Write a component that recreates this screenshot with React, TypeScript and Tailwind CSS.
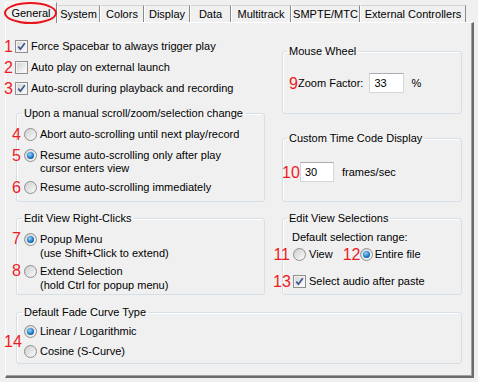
import React from "react";

const tabs = [
  { label: "General", w: "w-[52px]", selected: true },
  { label: "System", w: "w-[43px]" },
  { label: "Colors", w: "w-[44px]" },
  { label: "Display", w: "w-[46px]" },
  { label: "Data", w: "w-[41px]" },
  { label: "Multitrack", w: "w-[60px]" },
  { label: "SMPTE/MTC", w: "w-[69px]" },
  { label: "External Controllers", w: "w-[106px]" },
];

const Num: React.FC<{ n: string; className?: string }> = ({ n, className = "" }) => (
  <span className={`shrink-0 text-right text-[16px] leading-[13px] text-[#ec1c24] ${className}`}>{n}</span>
);

const Check: React.FC<{ checked?: boolean; className?: string }> = ({ checked, className = "" }) => (
  <span className={`shrink-0 w-[13px] h-[13px] border border-[#8e8f8f] bg-white flex items-center justify-center ${className}`}>
    <span className="w-[11px] h-[11px] border border-[#f4f4f4] bg-linear-to-br from-[#d6d6d6] to-[#fbfbfb] flex items-center justify-center">
      {checked && (
        <svg width="9" height="9" viewBox="0 0 9 9">
          <path d="M1.3 4.6 L3.4 7.2 L7.8 1.2" fill="none" stroke="#3f5590" strokeWidth="1.7" />
        </svg>
      )}
    </span>
  </span>
);

const Radio: React.FC<{ checked?: boolean; className?: string }> = ({ checked, className = "" }) => (
  <span className={`shrink-0 w-[13px] h-[13px] rounded-full border border-[#8e8f8f] bg-linear-to-br from-[#cfcfcf] to-[#fbfbfb] flex items-center justify-center ${className}`}>
    {checked && (
      <span className="w-[7px] h-[7px] rounded-full bg-[radial-gradient(circle_at_40%_35%,#9ad8ff,#1d78c4_55%,#0b3f7a)]" />
    )}
  </span>
);

const Group: React.FC<{ title: string; className?: string; children: React.ReactNode; right?: boolean }> = ({
  title,
  className = "",
  children,
  right,
}) => (
  <fieldset className={`border border-[#d5dfe5] rounded-[3px] shadow-[inset_1px_1px_0_#ffffff] ${className}`}>
    <legend className={`${right ? "ml-[4px]" : "ml-[5px]"} px-[2px] leading-[14px]`}>{title}</legend>
    {children}
  </fieldset>
);

const TextBox: React.FC<{ value: string; className?: string }> = ({ value, className = "" }) => (
  <span className={`h-[20px] bg-white border border-[#d3d6dc] border-t-[#abadb3] flex items-center pl-[4px] ${className}`}>
    {value}
  </span>
);

export default function App() {
  return (
    <div className="w-[478px] h-[382px] bg-[#f0f0f0] overflow-hidden font-['Liberation_Sans',Arial,sans-serif] text-[11px] text-black">
      {/* tab strip */}
      <div className="relative z-10 flex items-end h-[22px] pl-[5px]">
        {tabs.map((t) =>
          t.selected ? (
            <div
              key={t.label}
              className={`relative ${t.w} h-[21px] -mb-[1px] bg-[#f0f0f0] border-l border-t border-white border-r border-r-[#8a8a8a] flex justify-center pt-[4px] leading-[13px]`}
            >
              {t.label}
              <span className="absolute -left-[2px] -top-[1px] w-[53px] h-[22px] rounded-[50%] border-2 border-[#e8141c]" />
            </div>
          ) : (
            <div
              key={t.label}
              className={`${t.w} h-[17px] bg-[#f0f0f0] border-t border-t-[#d4d4d4] border-l border-l-white border-r border-r-[#8a8a8a] flex justify-center pt-[2px] leading-[13px]`}
            >
              {t.label}
            </div>
          )
        )}
      </div>

      {/* tab page */}
      <div className="ml-[5px] w-[469px] h-[356px] border-t border-l border-white border-r-2 border-b-2 border-r-[#6b6b6b] border-b-[#6b6b6b] shadow-[inset_-1px_-1px_0_#a0a0a0] pl-[10px] flex flex-col">
        <div className="flex">
          {/* left column */}
          <div className="w-[249px] flex flex-col">
            <div className="pt-[13px] -ml-[12px] flex flex-col">
              {[
                { n: "1", text: "Force Spacebar to always trigger play", c: true },
                { n: "2", text: "Auto play on external launch", c: false },
                { n: "3", text: "Auto-scroll during playback and recording", c: true },
              ].map((r) => (
                <div key={r.n} className="h-[21px] flex items-center">
                  <Num n={r.n} className="w-[9px]" />
                  <Check checked={r.c} className="ml-[2px]" />
                  <span className="ml-[3px]">{r.text}</span>
                </div>
              ))}
            </div>

            <Group title="Upon a manual scroll/zoom/selection change" className="mt-[7px] pb-[7px]">
              <div className="flex items-start mt-[8px] leading-[13px]">
                <Num n="4" className="w-[9px] -ml-[5px]" />
                <Radio className="ml-[3px]" />
                <span className="ml-[3px]">Abort auto-scrolling until next play/record</span>
              </div>
              <div className="flex items-start mt-[8px] leading-[13px]">
                <Num n="5" className="w-[9px] -ml-[5px]" />
                <Radio checked className="ml-[3px]" />
                <span className="ml-[3px]">
                  Resume auto-scrolling only after play
                  <br />
                  cursor enters view
                </span>
              </div>
              <div className="flex items-start mt-[6px] leading-[13px]">
                <Num n="6" className="w-[9px] -ml-[5px]" />
                <Radio className="ml-[3px]" />
                <span className="ml-[3px]">Resume auto-scrolling immediately</span>
              </div>
            </Group>

            <Group title="Edit View Right-Clicks" className="mt-[9px] pb-[2px]">
              <div className="flex items-start mt-[7px] leading-[14px]">
                <Num n="7" className="w-[9px] -ml-[5px] leading-[14px]" />
                <Radio checked className="ml-[3px] mt-[1px]" />
                <span className="ml-[3px]">
                  Popup Menu
                  <br />
                  (use Shift+Click to extend)
                </span>
              </div>
              <div className="flex items-start mt-[4px] leading-[14px]">
                <Num n="8" className="w-[9px] -ml-[5px] leading-[14px]" />
                <Radio className="ml-[3px] mt-[1px]" />
                <span className="ml-[3px]">
                  Extend Selection
                  <br />
                  (hold Ctrl for popup menu)
                </span>
              </div>
            </Group>
          </div>

          {/* right column */}
          <div className="ml-[17px] w-[180px] flex flex-col">
            <Group title="Mouse Wheel" right className="mt-[21px] pb-[20px]">
              <div className="flex items-center h-[20px] mt-[15px] pl-[6px]">
                <Num n="9" className="w-[9px] text-left" />
                <span>Zoom Factor:</span>
                <TextBox value="33" className="w-[35px] ml-[6px]" />
                <span className="ml-[7px]">%</span>
              </div>
            </Group>

            <Group title="Custom Time Code Display" right className="mt-[17px] pb-[19px]">
              <div className="flex items-center h-[20px] mt-[17px]">
                <Num n="10" className="w-[17px] -ml-[1px] text-left" />
                <TextBox value="30" className="w-[34px] ml-[1px]" />
                <span className="ml-[8px]">frames/sec</span>
              </div>
            </Group>

            <Group title="Edit View Selections" right className="mt-[9px] pb-[6px]">
              <div className="mt-[5px] pl-[9px] leading-[14px]">Default selection range:</div>
              <div className="flex items-center h-[13px] mt-[4px]">
                <Num n="11" className="w-[17px] -ml-[10px] text-left" />
                <Radio className="ml-[3px]" />
                <span className="ml-[3px]">View</span>
                <Num n="12" className="w-[17px] ml-[10px] text-left" />
                <Radio checked className="ml-[0px]" />
                <span className="ml-[2px]">Entire file</span>
              </div>
              <div className="flex items-center h-[13px] mt-[14px]">
                <Num n="13" className="w-[17px] -ml-[10px] text-left" />
                <Check checked className="ml-[3px]" />
                <span className="ml-[3px]">Select audio after paste</span>
              </div>
            </Group>
          </div>
        </div>

        <Group title="Default Fade Curve Type" className="mt-[10px] w-[446px] pb-[5px]">
          <div className="flex mt-[6px]">
            <Num n="14" className="w-[17px] -ml-[13px] self-center text-left" />
            <div className="flex flex-col ml-[3px] leading-[13px]">
              <div className="flex items-center">
                <Radio checked />
                <span className="ml-[3px]">Linear / Logarithmic</span>
              </div>
              <div className="flex items-center mt-[7px]">
                <Radio />
                <span className="ml-[3px]">Cosine (S-Curve)</span>
              </div>
            </div>
          </div>
        </Group>
      </div>
    </div>
  );
}
